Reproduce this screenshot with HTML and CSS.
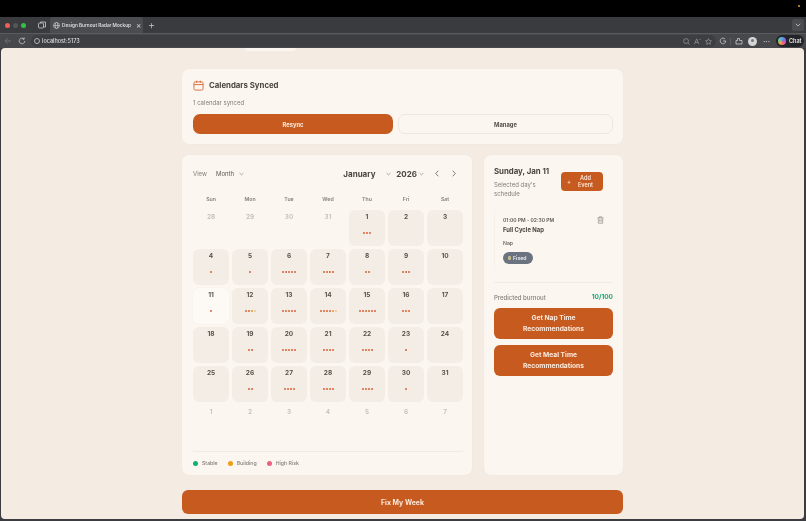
FILE: index.html
```html
<!DOCTYPE html>
<html lang="en">
<head>
<meta charset="UTF-8"/>
<title>Design Burnout Radar Mockup</title>
<link rel="stylesheet" href="styles.css">
</head>
<body>
<div class="notch"><span class="notch-dot"></span></div>

<div class="tabstrip">
  <div class="lights"><i class="red"></i><i class="grey"></i><i class="green"></i></div>
  <svg class="tabs-ico" width="8" height="8" viewBox="0 0 8 8"><rect x="0.5" y="2" width="5" height="5" rx="1"/><path d="M2.5 2V1h5v5H5.5"/></svg>
  <div class="tab">
    <svg width="7" height="7" viewBox="0 0 8 8"><circle cx="4" cy="4" r="3.4"/><ellipse cx="4" cy="4" rx="1.5" ry="3.4"/><path d="M0.6 4h6.8"/></svg>
    <span class="tab-title">Design Burnout Radar Mockup</span>
    <span class="tab-x">×</span>
  </div>
  <span class="tab-plus">+</span>
  <span class="tab-more">
    <svg width="6" height="4" viewBox="0 0 6 4"><path d="M0.7 0.8L3 3l2.3-2.2"/></svg>
  </span>
</div>

<div class="toolbar">
  <svg class="back" width="8" height="8" viewBox="0 0 8 8"><path d="M7 4H1M3.6 1.4L1 4l2.6 2.6"/></svg>
  <svg class="reload" width="8" height="8" viewBox="0 0 8 8"><path d="M6.8 4a2.8 2.8 0 1 1-.8-2M6.2 .6V2.2H4.6"/></svg>
  <div class="address">
    <svg width="6" height="6" viewBox="0 0 6 6"><circle cx="3" cy="3" r="2.5"/></svg>
    <span>localhost:5173</span>
    <div class="address-icons">
      <svg width="7" height="7" viewBox="0 0 8 8"><circle cx="3.5" cy="3.5" r="2.8"/><path d="M5.6 5.6L7.6 7.6"/></svg>
      <svg width="7" height="7" viewBox="0 0 8 8"><path d="M0.5 7L3 1l2.5 6M1.5 5h3M6 1.5h1.5"/></svg>
      <svg width="7" height="7" viewBox="0 0 8 8"><path d="M4 .7l1 2.2 2.4.3-1.8 1.6.5 2.4L4 6 1.900 7.200l.5-2.400L.6 3.200 3 2.900z"/></svg>
    </div>
  </div>
  <svg class="tool-ico" width="8" height="8" viewBox="0 0 8 8"><path d="M6.800 4a2.800 2.800 0 1 1-.8-2M4 4h2.800"/></svg>
  <span class="tool-sep"></span>
  <svg class="tool-ico puzzle" width="8" height="8" viewBox="0 0 8 8"><path d="M1 3.500h1.500V1.500h2V3.500H7V7H1z"/></svg>
  <span class="avatar"><i></i></span>
  <span class="dots-menu">···</span>
  <span class="chat"><i class="chat-logo"></i>Chat</span>
</div>

<div class="page">
  <span class="page-peek"></span>
  <main class="content">

    <section class="card sync">
      <div class="sync-head">
        <svg class="cal-ico" width="11" height="11" viewBox="0 0 12 12"><rect x="1" y="2" width="10" height="9" rx="1.500"/><path d="M1 5h10M4 .8v2.400M8 .8v2.400"/></svg>
        <h2>Calendars Synced</h2>
      </div>
      <p class="sync-note">1 calendar synced</p>
      <div class="sync-btns">
        <button class="btn-primary">Resync</button>
        <button class="btn-outline">Manage</button>
      </div>
    </section>

    <div class="columns">
      <section class="card calendar">
        <div class="cal-head">
          <span class="muted">View</span>
          <span class="select">Month <svg class="chev" width="5" height="4" viewBox="0 0 6 4"><path d="M.7 .8L3 3l2.300-2.200"/></svg></span>
          <span class="month">January <svg class="chev" width="5" height="4" viewBox="0 0 6 4"><path d="M.7 .8L3 3l2.300-2.200"/></svg></span>
          <span class="year">2026 <svg class="chev" width="5" height="4" viewBox="0 0 6 4"><path d="M.7 .8L3 3l2.300-2.200"/></svg></span>
          <svg class="nav-arrow first" width="6" height="7" viewBox="0 0 6 8"><path d="M4.500 .8L1.500 4l3 3.200"/></svg>
          <svg class="nav-arrow" width="6" height="7" viewBox="0 0 6 8"><path d="M1.500 .8l3 3.200-3 3.200"/></svg>
        </div>

        <div class="weekdays">
          <span>Sun</span><span>Mon</span><span>Tue</span><span>Wed</span><span>Thu</span><span>Fri</span><span>Sat</span>
        </div>

        <div class="grid">
          <div class="day off">28</div><div class="day off">29</div><div class="day off">30</div><div class="day off">31</div>
          <div class="day">1<div class="dots"><i></i><i></i><i></i></div></div>
          <div class="day">2</div>
          <div class="day">3</div>

          <div class="day">4<div class="dots"><i></i></div></div>
          <div class="day">5<div class="dots"><i></i></div></div>
          <div class="day">6<div class="dots"><i></i><i></i><i></i><i></i><i></i></div></div>
          <div class="day">7<div class="dots"><i></i><i></i><i></i><i></i></div></div>
          <div class="day">8<div class="dots"><i></i><i></i></div></div>
          <div class="day">9<div class="dots"><i></i><i></i><i></i></div></div>
          <div class="day">10</div>

          <div class="day selected">11<div class="dots"><i></i></div></div>
          <div class="day">12<div class="dots"><i></i><i></i><i class="amber"></i><i class="pale"></i></div></div>
          <div class="day">13<div class="dots"><i></i><i></i><i></i><i></i><i></i></div></div>
          <div class="day">14<div class="dots"><i></i><i></i><i></i><i></i><i class="amber"></i><i class="pale"></i></div></div>
          <div class="day">15<div class="dots"><i></i><i></i><i></i><i></i><i></i><i></i></div></div>
          <div class="day">16<div class="dots"><i></i><i></i><i></i></div></div>
          <div class="day">17</div>

          <div class="day">18</div>
          <div class="day">19<div class="dots"><i></i><i></i></div></div>
          <div class="day">20<div class="dots"><i></i><i></i><i></i><i></i><i></i></div></div>
          <div class="day">21<div class="dots"><i></i><i></i><i></i><i></i></div></div>
          <div class="day">22<div class="dots"><i></i><i></i><i></i><i></i></div></div>
          <div class="day">23<div class="dots"><i></i></div></div>
          <div class="day">24</div>

          <div class="day">25</div>
          <div class="day">26<div class="dots"><i></i><i></i></div></div>
          <div class="day">27<div class="dots"><i></i><i></i><i></i><i></i></div></div>
          <div class="day">28<div class="dots"><i></i><i></i><i></i><i></i></div></div>
          <div class="day">29<div class="dots"><i></i><i></i><i></i><i></i></div></div>
          <div class="day">30<div class="dots"><i></i></div></div>
          <div class="day">31</div>

          <div class="day off">1</div><div class="day off">2</div><div class="day off">3</div><div class="day off">4</div>
          <div class="day off">5</div><div class="day off">6</div><div class="day off">7</div>
        </div>

        <div class="legend">
          <span><i class="stable"></i>Stable</span>
          <span><i class="building"></i>Building</span>
          <span><i class="risk"></i>High Risk</span>
        </div>
      </section>

      <aside class="card side">
        <div class="side-head">
          <div class="side-title">
            <h3>Sunday, Jan 11</h3>
            <p>Selected day's schedule</p>
          </div>
          <button class="add-btn"><span class="plus">+</span><span>Add Event</span></button>
        </div>

        <div class="event">
          <div class="event-time">01:00 PM - 02:30 PM</div>
          <div class="event-name">Full Cycle Nap</div>
          <div class="event-type">Nap</div>
          <span class="pill"><i></i>Fixed</span>
          <svg class="trash" width="7" height="8" viewBox="0 0 8 9"><path d="M.8 2h6.400M2.800 2V.8h2.400V2M1.500 2v6.200h5V2M3.200 3.500v3.200M4.800 3.500v3.200"/></svg>
        </div>

        <div class="burnout">
          <span>Predicted burnout</span>
          <b>10/100</b>
        </div>
        <button class="btn-rec">Get Nap Time Recommendations</button>
        <button class="btn-rec">Get Meal Time Recommendations</button>
      </aside>
    </div>

    <button class="btn-fix">Fix My Week</button>
  </main>
</div>
</body>
</html>
```
FILE: styles.css
```css
*{margin:0;padding:0;box-sizing:border-box}
html,body{height:521px;overflow:hidden}
html{background:#3b3c40}
body{background:#3b3c40;font-family:"Inter","Liberation Sans",sans-serif;color:#4a4541;display:flex;flex-direction:column;filter:blur(.3px)}
button{font-family:inherit;border:none}
i{display:block;font-style:normal}

/* browser chrome */
.notch{height:17px;background:#000;position:relative}
.notch-dot{position:absolute;right:6px;top:5px;width:2px;height:2px;border-radius:50%;background:#e0a030}

.tabstrip{height:16px;background:#3a3b3f;display:flex;align-items:center;padding-left:5px;flex-shrink:0}
.lights{display:flex;gap:3px;width:33px}
.lights i{width:5px;height:5px;border-radius:50%}
.lights .red{background:#ee5f57}
.lights .grey{background:#55565a}
.lights .green{background:#2fc244}
.tabstrip svg,.toolbar svg{fill:none;stroke:#c9cacc;stroke-width:.8}
.tabs-ico{margin-right:4px}
.tab{width:93px;height:16px;background:#4b4c50;border-radius:3px 3px 0 0;display:flex;align-items:center;padding-left:3px;gap:2px}
.tab svg{flex-shrink:0}
.tab-title{font-size:4.700px;font-weight:600;color:#dcdcdd;white-space:nowrap;width:72px}
.tab-x{font-size:8px;color:#d8d8d8;line-height:1}
.tab-plus{font-size:11px;color:#c9cacc;margin-left:5px;font-weight:300}
.tab-more{margin-left:auto;margin-right:2px;width:12px;height:12px;border-radius:2px;background:#4b4c50;display:flex;align-items:center;justify-content:center}

.toolbar{height:15px;background:#47484c;border-top:1px solid #5a5b5f;display:flex;align-items:center;padding:0 2px 0 4px;flex-shrink:0}
.toolbar .back{stroke:#77787b;margin-right:6px}
.reload{margin-right:5px}
.address{flex:1;height:12px;border-radius:6px;background:#3d3e42;display:flex;align-items:center;padding:0 1px 0 3px;gap:2px;font-size:5.500px;color:#dedede;font-weight:500;margin-right:3px}
.address-icons{margin-left:auto;display:flex;gap:4px;padding-right:3px}
.address-icons svg{stroke:#9a9b9d}
.tool-ico{margin-right:3px}
.tool-ico.puzzle{margin-right:5px}
.tool-sep{width:1px;height:7px;background:#5d5e62;margin-right:4px}
.avatar{width:9px;height:9px;border-radius:50%;background:#d5d5d6;margin-right:6px;display:flex;justify-content:center;padding-top:2px}
.avatar i{width:3px;height:3px;border-radius:50%;background:#77787a}
.dots-menu{font-size:7px;color:#c9cacc;width:8px;margin-right:5px;font-weight:700}
.chat{width:28px;height:12px;border-radius:6px;background:#232427;display:flex;align-items:center;gap:3px;padding-left:2px;font-size:5.500px;font-weight:600;color:#e6e6e6}
.chat-logo{width:8px;height:8px;border-radius:50%;background:conic-gradient(#4fa3f0,#9a5ce6,#ee5c8c,#f0a040,#5fd08a,#4fa3f0)}

/* page */
.page{flex:1;margin:0 2px 2px 1px;background:#f4ece3;border-radius:4px;overflow:hidden;position:relative}
.page-peek{position:absolute;left:244px;top:0;width:51px;height:3px;background:#fbf6f0;border-radius:0 0 3px 3px}
.content{width:441px;margin:21px auto 0;display:flex;flex-direction:column}

.card{background:#fbf6f0;border-radius:7px;box-shadow:0 0 2px rgba(120,90,60,.05)}

.sync{height:75px;padding:9px 10px 0 11px}
.sync-head{display:flex;align-items:center;gap:5px;height:14px}
.cal-ico{fill:none;stroke:#d9683a;stroke-width:1}
.sync-head h2{font-size:7.800px;font-weight:700;color:#4a4541}
.sync-note{font-size:6px;color:#857e77;margin-top:6px;line-height:10px}
.sync-btns{display:flex;gap:5px;margin-top:6px}
.sync-btns button{height:20px;border-radius:7px;font-size:5.800px;font-weight:700}
.btn-primary{width:200px;background:#c75b1f;color:#fbe9dc}
.btn-outline{flex:1;background:#fbf6f0;border:1px solid #efe7de !important;color:#57514b}

.columns{display:flex;gap:12px;margin-top:11px}

.calendar{width:290px;height:320px;padding:0 9px 0 11px;display:flex;flex-direction:column}
.cal-head{display:flex;align-items:center;height:36px;font-size:6px;padding:1px 6px 0 0}
.muted{color:#857e77;width:23px}
.select{flex:1;color:#5f5953;display:flex;align-items:center;gap:5px}
.chev{fill:none;stroke:#857e77;stroke-width:.8}
.month{font-size:8px;font-weight:700;color:#4a4541;width:48px;display:flex;align-items:center;justify-content:space-between}
.year{font-size:8px;font-weight:700;color:#4a4541;display:flex;align-items:center;gap:2px;margin-left:5px}
.nav-arrow{fill:none;stroke:#5f5953;stroke-width:.9;margin-left:11px}
.nav-arrow.first{margin-left:10px}

.weekdays{display:grid;grid-template-columns:repeat(7,36px);gap:3px;font-size:5.200px;color:#857e77;text-align:center;font-weight:600;margin-top:2px;height:12px;line-height:12px}

.grid{display:grid;grid-template-columns:repeat(7,36px);grid-auto-rows:36px;gap:3px;margin-top:5px}
.day{border-radius:6px;background:#f4ede5;text-align:center;font-size:6.500px;font-weight:700;color:#57514b;padding-top:3px;line-height:9px}
.day.off{background:none;color:#c4bfb9;font-weight:600}
.day.selected{background:#fdfaf6;box-shadow:0 0 2px rgba(120,90,60,.06)}
.dots{display:flex;justify-content:center;gap:1px;margin-top:10px}
.dots i{width:2px;height:2px;border-radius:50%;background:#dc6238}
.dots .amber{background:#e89a2c}
.dots .pale{background:#ecc590}

.legend{margin-top:auto;margin-bottom:7px;border-top:1px solid #f2ebe3;padding-top:7px;height:17px;display:flex;gap:10px;font-size:5.200px;color:#857e77;line-height:9px;font-weight:500}
.legend span{display:flex;align-items:center;gap:4px}
.legend i{width:5px;height:5px;border-radius:50%}
.legend .stable{background:#10b07a}
.legend .building{background:#f09c14}
.legend .risk{background:#ee5f80}

.side{width:139px;height:320px;padding:11px 10px 0}
.side-head{display:flex;justify-content:space-between;align-items:flex-start;width:109px}
.side-title{width:60px}
.side-title h3{font-size:7.800px;font-weight:700;color:#4a4541;white-space:nowrap;line-height:11px}
.side-title p{font-size:6px;color:#857e77;line-height:9px;margin-top:3px}
.add-btn{width:42px;height:19px;margin-top:6px;border-radius:4px;background:#c75b1f;color:#fbe9dc;font-size:5.500px;font-weight:600;line-height:7px;display:flex;align-items:center;padding:0 6px;gap:3px}
.plus{font-size:6px;font-weight:500}

.event{position:relative;margin-top:11px;height:62px;padding:7px 0 0 8px;border-left:1px solid #f6f0e9;border-radius:4px}
.event-time{font-size:5px;color:#5f5953;line-height:8px;font-weight:600}
.event-name{font-size:5.900px;font-weight:700;color:#4a4541;margin-top:1px;line-height:10px}
.event-type{font-size:5.200px;color:#5f5953;margin-top:4px;line-height:8px;font-weight:500}
.pill{display:flex;align-items:center;gap:2px;margin-top:5px;height:12px;width:30px;border-radius:6px;background:#6b7280;color:#eceef0;font-size:5.200px;font-weight:600;padding-left:5px}
.pill i{width:3px;height:4px;border-radius:1px;background:#c2bb8c}
.trash{position:absolute;left:102px;top:7px;fill:none;stroke:#857e77;stroke-width:.7}

.burnout{margin-top:11px;border-top:1px solid #f2ebe3;padding-top:10px;display:flex;justify-content:space-between;font-size:6px;color:#857e77;line-height:9px;font-weight:500}
.burnout b{color:#10a974;font-weight:700;font-size:6.500px}

.btn-rec{display:block;width:119px;height:31px;margin-top:6px;border-radius:6px;background:#c75b1f;color:#fbe9dc;font-size:6.700px;font-weight:700;line-height:10.500px;padding:0 14px}

.btn-fix{margin-top:15px;height:24px;border-radius:6px;background:#c75b1f;color:#fbe9dc;font-size:6.900px;font-weight:700}
```
